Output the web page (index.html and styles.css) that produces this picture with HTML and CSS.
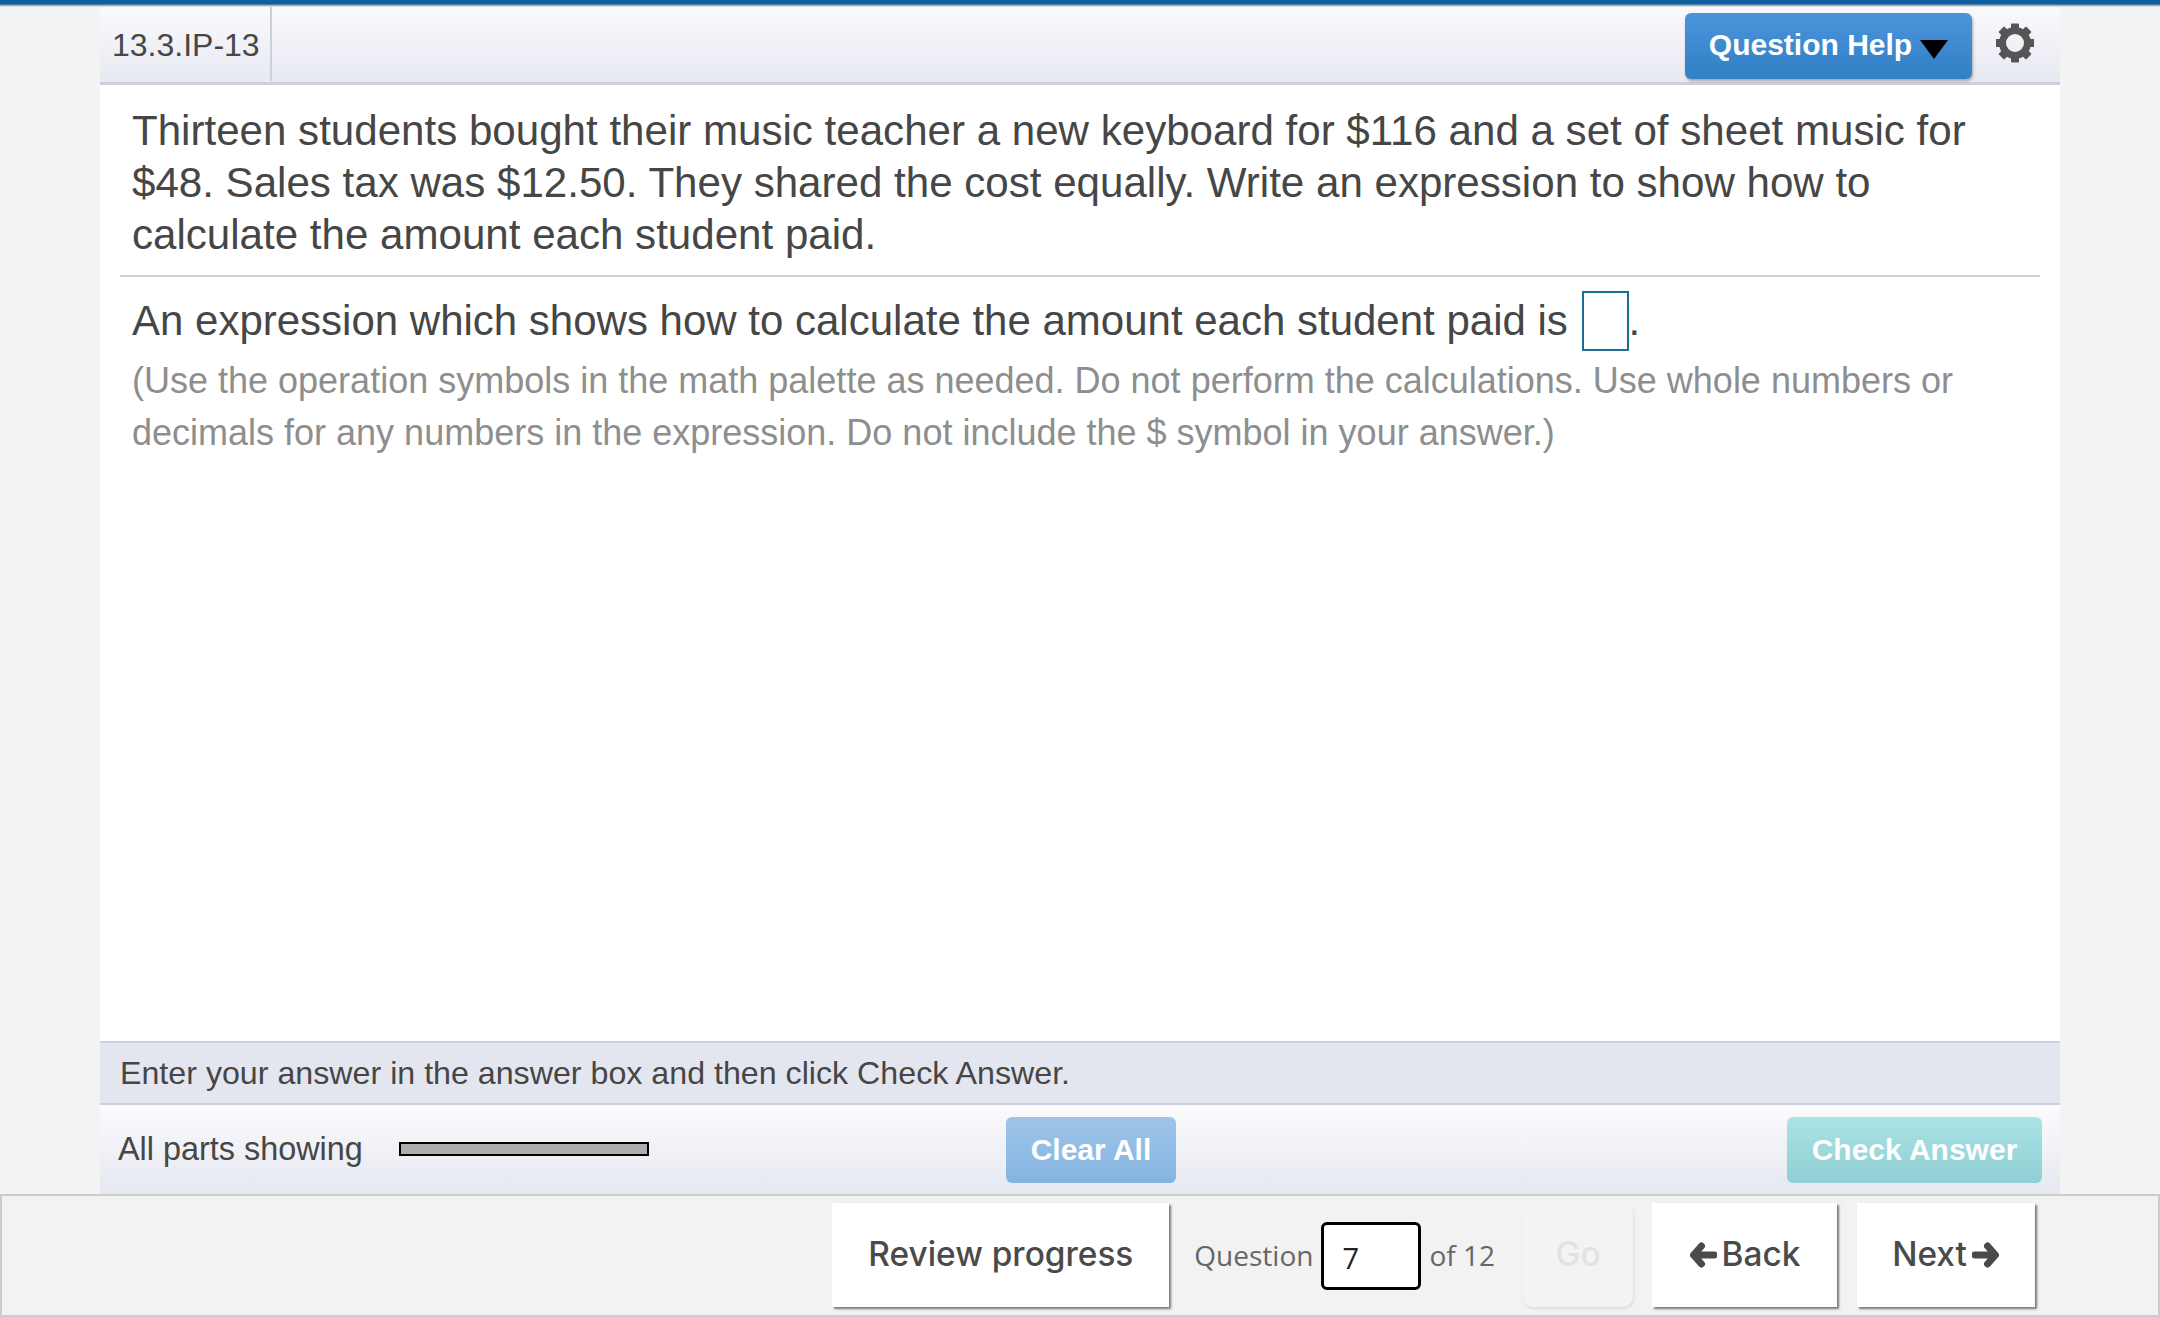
FILE: index.html
```html
<!DOCTYPE html>
<html lang="en">

<head>
    <meta charset="UTF-8" />
    <title>13.3.IP-13</title>
    <link rel="stylesheet" href="styles.css">
</head>

<body>
    <div class="top-bar"></div>
    <div class="card">
        <header class="card-head">
            <div class="q-id">13.3.IP-13</div>
            <div class="head-tools">
                <button class="btn btn-help"><span class="help-label">Question Help</span> <span class="caret"></span></button>
                <svg class="gear" viewBox="0 0 38 40" aria-hidden="true">
                    <g fill="#555">
                        <rect x="15" y="0.500" width="8" height="9" rx="1" />
                        <rect x="15" y="0.500" width="8" height="9" rx="1" transform="rotate(45 19 20)" />
                        <rect x="15" y="0.500" width="8" height="9" rx="1" transform="rotate(90 19 20)" />
                        <rect x="15" y="0.500" width="8" height="9" rx="1" transform="rotate(135 19 20)" />
                        <rect x="15" y="0.500" width="8" height="9" rx="1" transform="rotate(180 19 20)" />
                        <rect x="15" y="0.500" width="8" height="9" rx="1" transform="rotate(225 19 20)" />
                        <rect x="15" y="0.500" width="8" height="9" rx="1" transform="rotate(270 19 20)" />
                        <rect x="15" y="0.500" width="8" height="9" rx="1" transform="rotate(315 19 20)" />
                    </g>
                    <circle cx="19" cy="20" r="12.500" fill="none" stroke="#555" stroke-width="7" />
                </svg>
            </div>
        </header>
        <main class="card-body">
            <p class="question">Thirteen students bought their music teacher a new keyboard for $116 and a set of sheet music for $48. Sales tax was $12.50. They shared the cost equally. Write an expression to show how to calculate the amount each student paid.</p>
            <hr class="rule" />
            <p class="answer-line">An expression which shows how to calculate the amount each student paid is <span class="answer-box"></span>.</p>
            <p class="hint">(Use the operation symbols in the math palette as needed. Do not perform the calculations. Use whole numbers or decimals for any numbers in the expression. Do not include the $ symbol in your answer.)</p>
        </main>
        <div class="instruction">Enter your answer in the answer box and then click Check Answer.</div>
        <div class="actions">
            <div class="parts">
                <span>All parts showing</span>
                <div class="parts-bar"></div>
            </div>
            <button class="btn btn-clear">Clear All</button>
            <button class="btn btn-check">Check Answer</button>
        </div>
    </div>
    <nav class="nav-bar">
        <button class="nav-btn nav-review"><span class="nav-label">Review progress</span></button>
        <div class="q-jump">
            <span>Question</span>
            <input class="q-input" type="text" value="7" />
            <span>of 12</span>
        </div>
        <button class="nav-btn nav-go"><span class="nav-label">Go</span></button>
        <button class="nav-btn nav-back">
            <svg class="arrow" viewBox="0 0 28 28" aria-hidden="true"><path d="M12.500 5 L4.500 14 L12.500 23 M5 14 H25" /></svg>
            <span class="nav-label">Back</span>
        </button>
        <button class="nav-btn nav-next">
            <span class="nav-label">Next</span>
            <svg class="arrow" viewBox="0 0 28 28" aria-hidden="true"><path d="M15.500 5 L23.500 14 L15.500 23 M23 14 H3" /></svg>
        </button>
    </nav>
</body>

</html>
```

FILE: styles.css
```css
* {
    box-sizing: border-box;
}

html,
body {
    margin: 0;
    height: 100%;
    overflow: hidden;
}

body {
    display: flex;
    flex-direction: column;
    height: 1317px;
    background-color: #f3f3f3;
    font-family: "Liberation Sans", Arial, sans-serif;
    color: #464646;
}

.top-bar {
    flex: none;
    height: 7px;
    background: linear-gradient(#0e5f9e 0, #0e5f9e 4px, #8a9aa6 5px, #f0f1f3 7px);
}

.card {
    flex: 1;
    display: flex;
    flex-direction: column;
    width: 1960px;
    margin-left: 100px;
    background-color: #fff;
}

.card-head {
    flex: none;
    display: flex;
    justify-content: space-between;
    height: 78px;
    background: linear-gradient(#fafafc, #e7e9f2);
    border-bottom: 3px solid #ccd0da;
}

.q-id {
    width: 172px;
    height: 74px;
    padding: 19px 0 0 12px;
    border-right: 2px solid #ccd0da;
    font-size: 32px;
    line-height: 38px;
}

.head-tools {
    display: flex;
    align-items: flex-start;
    padding: 6px 26px 0 0;
}

.btn {
    border: 0;
    border-radius: 6px;
    height: 66px;
    padding: 0;
    font-family: "Liberation Sans", Arial, sans-serif;
    font-size: 30px;
    font-weight: 700;
    color: #fff;
}

.btn-help {
    display: flex;
    align-items: center;
    justify-content: center;
    gap: 8px;
    width: 287px;
    background: linear-gradient(#4a94db, #327fc5);
    box-shadow: 1px 2px 3px rgba(0, 0, 0, 0.3);
}

.help-label {
    margin-top: -2px;
}

.caret {
    width: 0;
    height: 0;
    margin-top: 6px;
    border-left: 14px solid transparent;
    border-right: 14px solid transparent;
    border-top: 19px solid #000;
}

.gear {
    width: 38px;
    height: 40px;
    margin: 10px 0 0 24px;
}

.card-body {
    flex: 1;
    padding: 20px 20px 0;
}

.question {
    margin: 0 12px;
    font-size: 42.1px;
    line-height: 52px;
}

.rule {
    margin: 14px 0 0;
    height: 2px;
    border: 0;
    background-color: #cfcfcf;
}

.answer-line {
    margin: 14px 12px 0;
    font-size: 42px;
    line-height: 60px;
}

.answer-box {
    display: inline-block;
    width: 47px;
    height: 60px;
    margin-left: 2px;
    border: 2px solid #1b6f8f;
    vertical-align: top;
}

.hint {
    margin: 0 12px;
    padding-top: 4px;
    font-size: 36px;
    line-height: 52px;
    color: #8e8e8e;
}

.instruction {
    flex: none;
    height: 64px;
    padding-left: 20px;
    background-color: #e3e6ef;
    border-top: 2px solid #ccd0da;
    border-bottom: 2px solid #ccd0da;
    font-size: 32.2px;
    line-height: 61px;
}

.actions {
    flex: none;
    display: flex;
    align-items: center;
    height: 89px;
    padding: 0 18px 0 18px;
    background: linear-gradient(#fbfbfd, #e6e8f1);
}

.parts {
    display: flex;
    align-items: center;
    gap: 36px;
    width: 888px;
    font-size: 32.4px;
}

.parts-bar {
    width: 250px;
    height: 14px;
    margin-top: -2px;
    background-color: #adadad;
    border: 2px solid #000;
}

.btn-clear {
    width: 170px;
    background: linear-gradient(#9ec4e9, #85b4e0);
}

.btn-check {
    width: 255px;
    margin-left: auto;
    background: linear-gradient(#aae3e6, #8fcfd3);
}

.nav-bar {
    flex: none;
    display: flex;
    align-items: center;
    justify-content: flex-end;
    height: 123px;
    padding: 0 123px 2px 0;
    background-color: #f2f2f2;
    border: 2px solid #ccc;
}

.nav-btn {
    display: flex;
    align-items: center;
    justify-content: center;
    gap: 5px;
    height: 104px;
    padding: 0;
    border: 0;
    background-color: #fff;
    box-shadow: 2px 2px 2px #777;
    font-family: Inter, "Liberation Sans", sans-serif;
    font-size: 33.4px;
    font-weight: 500;
    color: #4a4a4a;
}

.nav-label {
    margin-top: -2px;
}

.nav-review {
    width: 337px;
}

.q-jump {
    display: flex;
    align-items: center;
    gap: 8px;
    margin: 0 28px 0 25px;
    font-family: "Open Sans", sans-serif;
    font-size: 28px;
    color: #666;
}

.q-input {
    width: 100px;
    height: 68px;
    margin-top: 2px;
    padding: 4px 0 0 18px;
    border: 3px solid #000;
    border-radius: 6px;
    background-color: #fff;
    font-family: "Open Sans", sans-serif;
    font-size: 29px;
    color: #222;
}

.nav-go {
    width: 110px;
    border-radius: 10px;
    background-color: #f3f3f3;
    box-shadow: 1px 2px 3px #ddd;
    color: #e2e2e2;
}

.nav-back {
    width: 185px;
    margin-left: 19px;
}

.nav-next {
    width: 178px;
    margin-left: 20px;
}

.arrow {
    width: 28px;
    height: 28px;
    fill: none;
    stroke: #4a4a4a;
    stroke-width: 7;
    stroke-linecap: round;
    stroke-linejoin: round;
}
```
